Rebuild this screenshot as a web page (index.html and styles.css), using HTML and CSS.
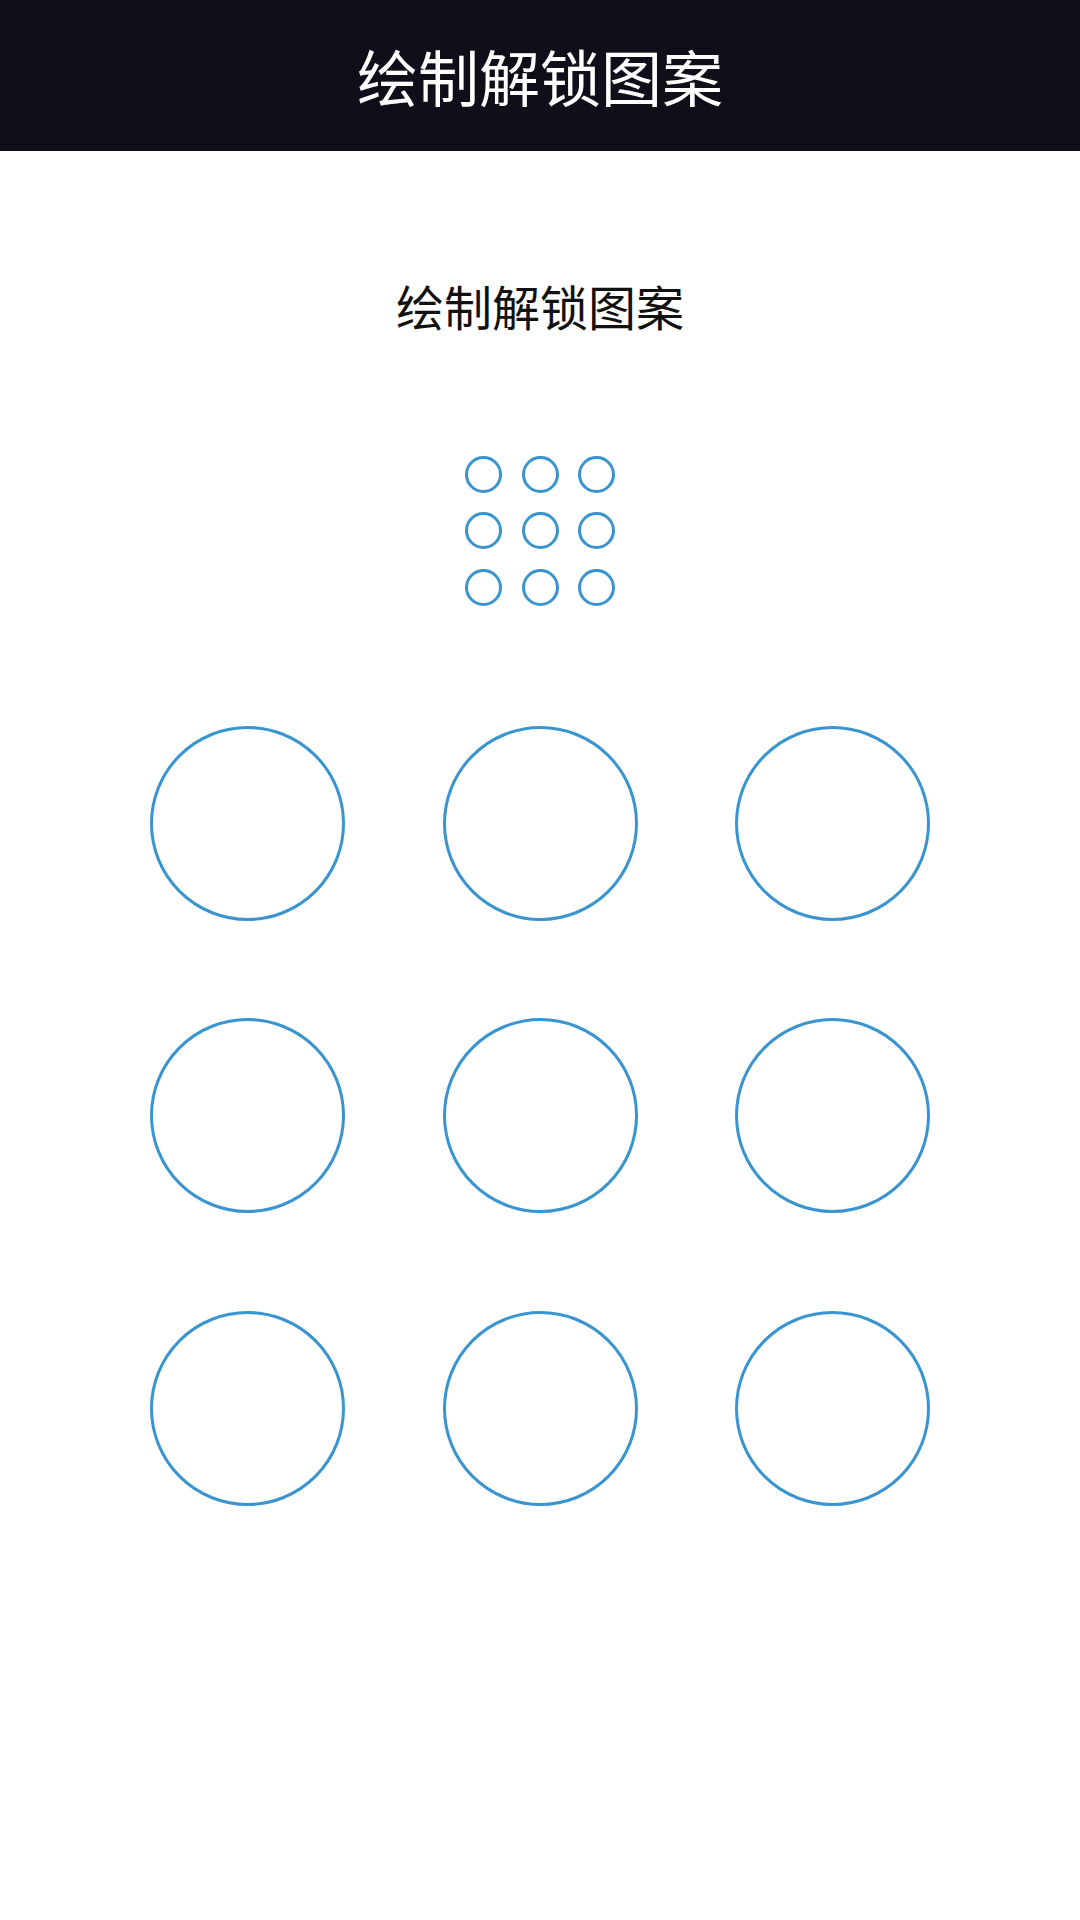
FILE: index.html
```html
<!DOCTYPE html>
<html lang="zh-CN">
<head>
<meta charset="utf-8">
<title>绘制解锁图案</title>
<link rel="stylesheet" href="styles.css">
</head>
<body>
<header class="topbar">
  <h1 class="topbar-title">绘制解锁图案</h1>
</header>
<main class="content">
  <p class="hint">绘制解锁图案</p>
  <div class="preview">
    <span class="dot"></span><span class="dot"></span><span class="dot"></span>
    <span class="dot"></span><span class="dot"></span><span class="dot"></span>
    <span class="dot"></span><span class="dot"></span><span class="dot"></span>
  </div>
  <div class="pad">
    <span class="node"></span><span class="node"></span><span class="node"></span>
    <span class="node"></span><span class="node"></span><span class="node"></span>
    <span class="node"></span><span class="node"></span><span class="node"></span>
  </div>
</main>
</body>
</html>
```

FILE: styles.css
```css
* { box-sizing: border-box; }
html, body {
  margin: 0;
  padding: 0;
  background: #ffffff;
  font-family: "Noto Sans CJK SC", "Noto Sans", sans-serif;
}
body {
  width: 1080px;
  height: 1920px;
  overflow: hidden;
}
.topbar {
  height: 151px;
  background: #0f0f1a;
  display: flex;
  align-items: center;
  justify-content: center;
}
.topbar-title {
  margin: 0;
  color: #ffffff;
  font-size: 61px;
  font-weight: 400;
  line-height: 1;
}
.content {
  display: flex;
  flex-direction: column;
  align-items: center;
}
.hint {
  margin: 130px 0 0;
  font-size: 48px;
  line-height: 48px;
  color: #111111;
}
.preview {
  margin-top: 127px;
  display: grid;
  grid-template-columns: repeat(3, 37px);
  grid-auto-rows: 37px;
  gap: 19.3px;
}
.dot {
  display: block;
  border: 3px solid #3a94cf;
  border-radius: 50%;
}
.pad {
  margin-top: 120px;
  display: grid;
  grid-template-columns: repeat(3, 195px);
  grid-auto-rows: 195px;
  gap: 97.7px;
}
.node {
  display: block;
  border: 3px solid #3a94cf;
  border-radius: 50%;
}
```
